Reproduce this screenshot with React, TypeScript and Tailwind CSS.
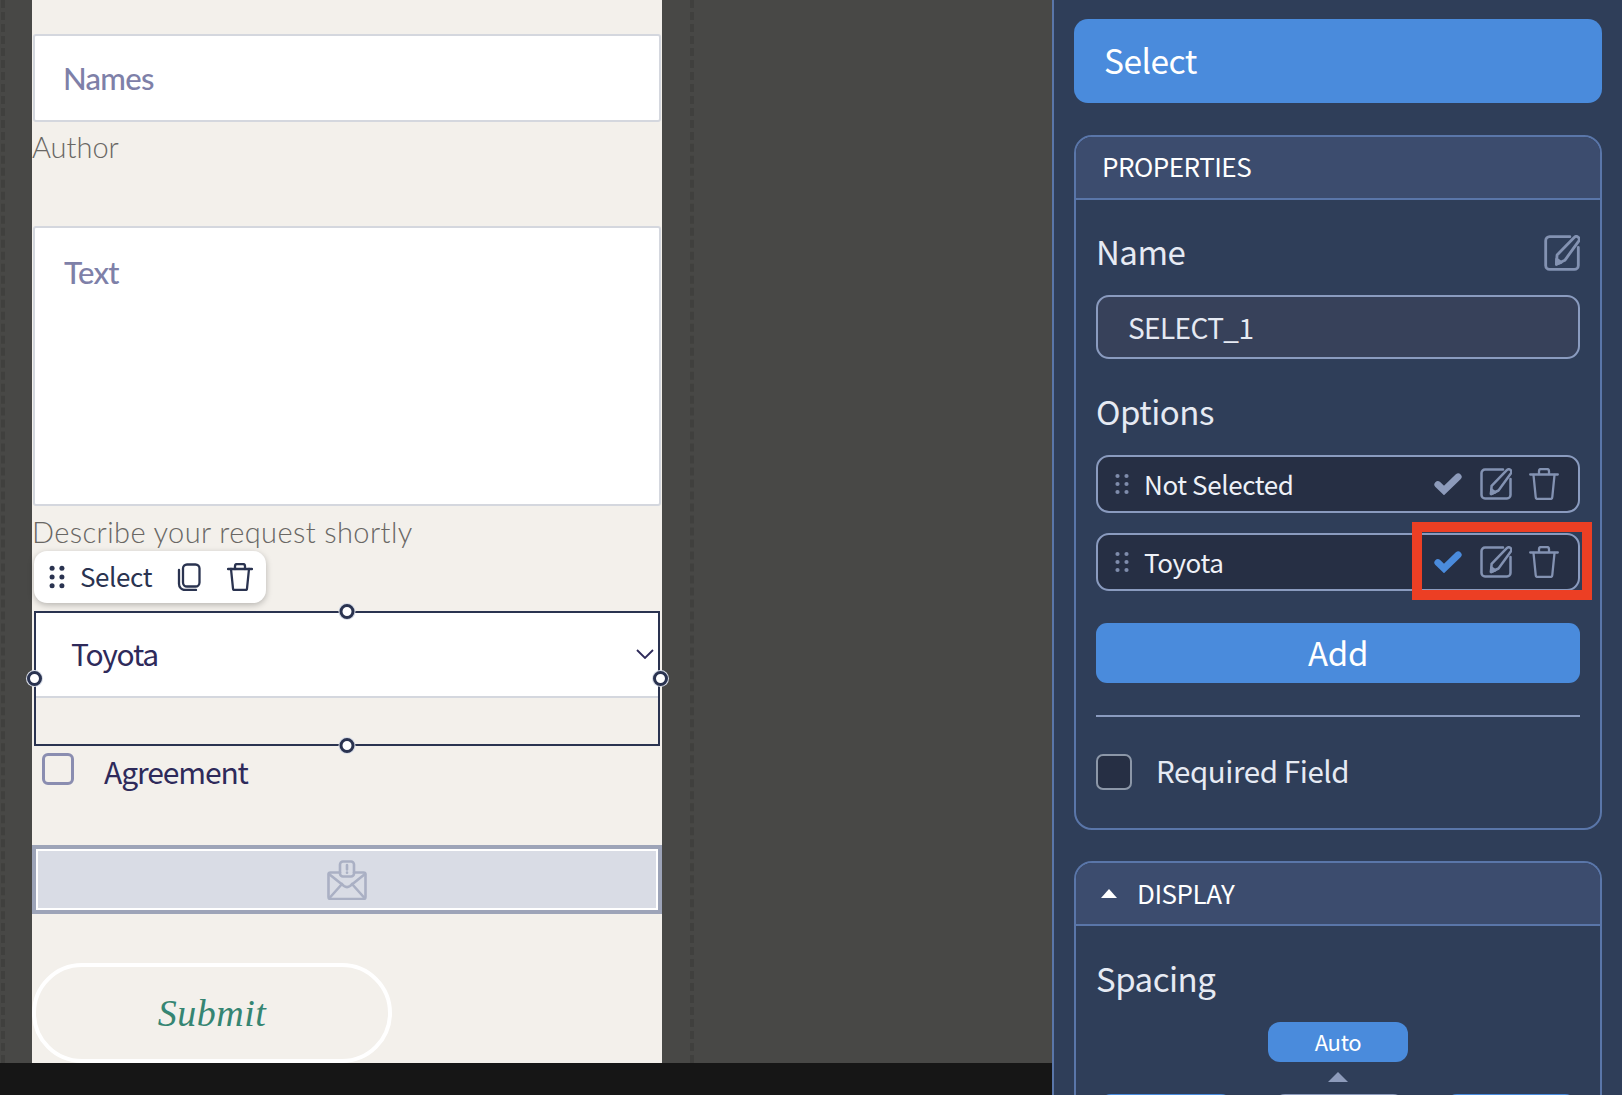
const sans = "font-['Noto_Sans_CJK_JP','Source_Sans_Pro',sans-serif]";

function Edit({ className = "" }: { className?: string }) {
  return (
    <svg viewBox="0 0 32 32" fill="none" stroke="currentColor" strokeWidth="2.500" strokeLinejoin="round" strokeLinecap="round" className={className}>
      <path d="M23 1.500H5A3.500 3.500 0 0 0 1.500 5v22A3.500 3.500 0 0 0 5 30.500h22a3.500 3.500 0 0 0 3.500-3.500V11" />
      <path d="M26.800 2.200a2.600 2.600 0 0 1 4.200 3L18.500 22.500 11 26l.6-8.200z" />
      <path d="M11.300 21.500l4 2.800 -4.300 1.700z" fill="currentColor" />
    </svg>
  );
}

function Trash({ className = "" }: { className?: string }) {
  return (
    <svg viewBox="0 0 30 32" fill="none" stroke="currentColor" strokeWidth="2.300" strokeLinejoin="round" strokeLinecap="round" className={className}>
      <path d="M1.200 6.500h27.600" />
      <path d="M10 6V3a2 2 0 0 1 2-2h6a2 2 0 0 1 2 2v3" />
      <path d="M4.500 7l2.200 22a2 2 0 0 0 2 2h12.600a2 2 0 0 0 2-2l2.200-22" />
    </svg>
  );
}

function Dots({ className = "", r = 1.5 }: { className?: string; r?: number }) {
  return (
    <svg viewBox="0 0 14 22" fill="currentColor" className={className}>
      {[3, 11, 19].map((y) => (
        <g key={y}>
          <circle cx="2.500" cy={y} r={r} />
          <circle cx="11.500" cy={y} r={r} />
        </g>
      ))}
    </svg>
  );
}

function Check({ className = "" }: { className?: string }) {
  return (
    <svg viewBox="0 0 28 22" fill="none" stroke="currentColor" strokeWidth="6.800" strokeLinejoin="miter" strokeLinecap="round" className={className}>
      <path d="M3.800 11.500l6.200 6L24.200 3.800" />
    </svg>
  );
}

function Handle({ className }: { className: string }) {
  return <span className={`absolute w-[15px] h-[15px] rounded-full bg-white border-[3px] border-[#2a3350] ring-1 ring-[#d6dbe6] ${className}`} />;
}

function OptionRow({ label, check }: { label: string; check: string }) {
  return (
    <div className="h-[58px] rounded-[13px] border-2 border-[#8a9bbf] bg-[#262f44] flex items-center pl-[17px] pr-[19px]">
      <Dots className="w-[14px] h-[22px] text-[#7f8dac]" r={2.100} />
      <span className="ml-[15px] text-[26px] leading-none text-[#eef1f7] flex-1 tracking-[-0.4px] pb-[1px]">{label}</span>
      <Check className={`w-[28px] h-[22px] ${check}`} />
      <Edit className="ml-[18px] w-[32px] h-[32px] text-[#8392b2]" />
      <Trash className="ml-[17px] w-[30px] h-[32px] text-[#8392b2]" />
    </div>
  );
}

function CardHeader({ children }: { children: React.ReactNode }) {
  return (
    <div className="h-[63px] bg-[#3c4c6e] border-b-2 border-[#5a76a9] rounded-t-[16px] flex items-center px-[26px] text-[26px] tracking-[-0.5px] text-white leading-none">
      {children}
    </div>
  );
}

export default function App() {
  return (
    <div className={`relative w-[1622px] h-[1095px] overflow-hidden flex bg-[#2f3e59] ${sans}`}>
      {/* Canvas */}
      <div className="w-[1052px] h-full flex flex-col shrink-0">
        <div className="relative flex-1 bg-[#484846] pl-[32px]">
          <div className="absolute left-[1px] top-0 bottom-0 border-l-4 border-dashed border-[#40403e]" />
          <div className="absolute left-[690px] top-0 bottom-0 border-l-4 border-dashed border-[#40403e]" />
          <div className="relative w-[630px] h-full bg-[#f3f0eb] pt-[34px] flex flex-col">
            <div className="mx-px h-[88px] bg-white border-2 border-[#d4d7de] rounded-[3px] flex items-center pl-[28px] font-['Lato',sans-serif] text-[#7e80a8] text-[31px] font-medium tracking-[-0.7px]">
              Names
            </div>
            <div className="mt-[5px] h-[38px] flex items-center font-['Lato',sans-serif] font-light text-[#696764] text-[29px] leading-none">Author</div>
            <div className="mt-[61px] mx-px h-[280px] bg-white border-2 border-[#d4d7de] rounded-[3px] pl-[29px] pt-[22px] font-['Lato',sans-serif] text-[#7e80a8] text-[31px] font-medium tracking-[-0.7px] leading-[44px]">
              Text
            </div>
            <div className="mt-[6px] h-[38px] flex items-center font-['Lato',sans-serif] font-light text-[#696764] text-[29px] leading-none tracking-[0.4px]">Describe your request shortly</div>

            <div className="ml-[2px] mt-[1px] w-[232px] h-[52px] bg-white rounded-[13px] shadow-[0_2px_6px_rgba(0,0,0,0.25)] flex items-center pl-[15px] text-[#2a3350] relative z-10">
              <Dots className="w-[16px] h-[24px]" r={2.300} />
              <span className="ml-[15px] text-[26px] leading-none tracking-[-0.4px] pb-[3px]">Select</span>
              <svg viewBox="0 0 24 28" fill="none" stroke="currentColor" strokeWidth="2.300" strokeLinecap="round" strokeLinejoin="round" className="ml-[25px] w-[24px] h-[28px]">
                <rect x="6" y="1.500" width="16.500" height="22" rx="4" />
                <path d="M2 7v14a6 6 0 0 0 6 6h11" />
              </svg>
              <svg viewBox="0 0 26 28" fill="none" stroke="currentColor" strokeWidth="2.300" strokeLinecap="round" strokeLinejoin="round" className="ml-[26px] w-[26px] h-[28px]">
                <path d="M1 6h24" />
                <path d="M8 6V3a2 2 0 0 1 2-2h6a2 2 0 0 1 2 2v3" />
                <path d="M4 6l2 19.500a1.500 1.500 0 0 0 1.500 1.500h11a1.500 1.500 0 0 0 1.500-1.500L22 6" />
              </svg>
            </div>

            <div className="relative mt-[8px] mx-[2px] h-[135px] border-2 border-[#2a3350]">
              <div className="h-[85px] bg-white border-b-2 border-[#d4d7de] flex items-center pl-[35px] pr-[4px] text-[#2e2a5a] text-[30px] tracking-[-1.250px]">
                <span className="flex-1 pb-[3px]">Toyota</span>
                <svg viewBox="0 0 18 10" fill="none" stroke="currentColor" strokeWidth="1.800" className="w-[18px] h-[10px] -mt-[2px]">
                  <path d="M1 1l8 8 8-8" />
                </svg>
              </div>
              <Handle className="left-1/2 -translate-x-1/2 -top-[9px]" />
              <Handle className="left-1/2 -translate-x-1/2 -bottom-[9px]" />
              <Handle className="-left-[9px] top-[58px]" />
              <Handle className="-right-[10px] top-[58px]" />
            </div>

            <div className="mt-[7px] ml-[10px] h-[32px] flex items-center">
              <span className="w-[32px] h-[32px] rounded-[6px] border-[3px] border-[#8a8db0] shrink-0" />
              <span className="ml-[30px] text-[#2e2a5a] text-[30px] tracking-[-1.100px] leading-none pt-[3px]">Agreement</span>
            </div>

            <div className="mt-[60px] h-[69px] border-4 border-[#9da4b8] shrink-0">
              <div className="h-full border-2 border-white bg-[#d9dce5] flex items-center justify-center">
                <svg viewBox="0 0 40 40" fill="none" stroke="#aab0c4" strokeWidth="2.600" strokeLinejoin="round" strokeLinecap="round" className="w-[40px] h-[40px] ">
                  <path d="M13 12.500H3.500a2 2 0 0 0-2 2v22.500a2 2 0 0 0 2 2h33a2 2 0 0 0 2-2V14.500a2 2 0 0 0-2-2H27" />
                  <rect x="13" y="1.500" width="14" height="15" rx="3" />
                  <path d="M2 14L17 26c2 1.500 4 1.500 6 0L38 14" />
                  <path d="M2.500 38l12.500-14M37.500 38L25 24" />
                  <path d="M20 5v4.500M20 12.500v.3" />
                </svg>
              </div>
            </div>

            <div className="mt-[49px] h-[100px] w-[360px] shrink-0 rounded-full border-4 border-white flex items-center justify-center font-['Liberation_Serif',serif] italic text-[#358572] text-[38px] tracking-[0.5px]">
              Submit
            </div>
          </div>
        </div>
        <div className="h-[32px] bg-[#161616] shrink-0" />
      </div>

      {/* Panel */}
      <div className="w-[570px] border-l-2 border-[#5a76a9] pl-[20px] pt-[19px] pr-[20px] flex flex-col shrink-0">
        <div className="h-[84px] rounded-[14px] bg-[#4a8bdc] flex items-center pl-[30px] text-white text-[33.500px] tracking-[-0.5px] leading-none pb-[3px] shrink-0">Select</div>

        <div className="mt-[32px] h-[695px] rounded-[18px] border-2 border-[#5a76a9] shrink-0">
          <CardHeader><span className="pb-[3px]">PROPERTIES</span></CardHeader>
          <div className="px-[20px] pt-[33px]">
            <div className="flex items-center justify-between h-[40px]">
              <span className="text-[33px] text-[#e6eaf3] leading-none tracking-[-0.5px] pb-[3px]">Name</span>
              <Edit className="w-[36px] h-[36px] text-[#8392b2]" />
            </div>
            <div className="mt-[22px] h-[64px] rounded-[13px] border-2 border-[#8a9bbf] bg-[#37415a] flex items-center pl-[30px] text-[#e6eaf3] text-[28px] tracking-[-0.6px] leading-none">SELECT_1</div>
            <div className="mt-[35px] h-[40px] flex items-center text-[33px] text-[#e6eaf3] tracking-[-0.5px] leading-none pb-[5px]">Options</div>
            <div className="mt-[21px] flex flex-col gap-[20px]">
              <OptionRow label="Not Selected" check="text-[#8d9bbb]" />
              <OptionRow label="Toyota" check="text-[#4a8bdc]" />
            </div>
            <div className="mt-[32px] h-[60px] rounded-[11px] bg-[#4a8bdc] flex items-center justify-center text-white text-[33px] tracking-[-0.3px] leading-none pb-[2px]">Add</div>
            <div className="mt-[32px] h-[2px] bg-[#8a9bbf]" />
            <div className="mt-[37px] flex items-center h-[36px]">
              <span className="w-[36px] h-[36px] rounded-[7px] bg-[#262f44] border-2 border-[#8c97a8]" />
              <span className="ml-[24px] text-[29.500px] text-[#e6eaf3] leading-none tracking-[-0.4px] pb-[3px]">Required Field</span>
            </div>
          </div>
        </div>

        <div className="mt-[31px] rounded-t-[18px] border-2 border-b-0 border-[#5a76a9] flex-1">
          <CardHeader>
            <svg viewBox="0 0 16 9" className="w-[16px] h-[9px] -ml-[1px]" fill="#ffffff"><path d="M8 0l8 9H0z" /></svg>
            <span className="ml-[20px] pb-[2px]">DISPLAY</span>
          </CardHeader>
          <div className="px-[20px] pt-[33px]">
            <div className="h-[40px] flex items-center text-[33px] text-[#e6eaf3] tracking-[-0.5px] leading-none pb-[2px]">Spacing</div>
            <div className="mt-[23px] mx-auto w-[140px] h-[40px] rounded-[12px] bg-[#4a8bdc] flex items-center justify-center text-white text-[22px] tracking-[-0.3px] leading-none pb-[3px]">Auto</div>
            <svg viewBox="0 0 20 10" fill="#8d9bbb" className="mt-[10px] mx-auto block w-[20px] h-[10px]"><path d="M10 0l10 10H0z" /></svg>
            <div className="mt-[12px] flex justify-between px-[3px]">
              <div className="w-[134px] h-[40px] rounded-[12px] bg-[#4a8bdc]" />
              <div className="w-[132px] h-[40px] rounded-[12px] bg-[#8d9bbb]" />
              <div className="w-[132px] h-[40px] rounded-[12px] bg-[#4a8bdc]" />
            </div>
          </div>
        </div>
      </div>

      {/* Annotation */}
      <div className="absolute left-[1412px] top-[522px] w-[180px] h-[78px] border-[10px] border-[#ec3f24]" />
    </div>
  );
}
